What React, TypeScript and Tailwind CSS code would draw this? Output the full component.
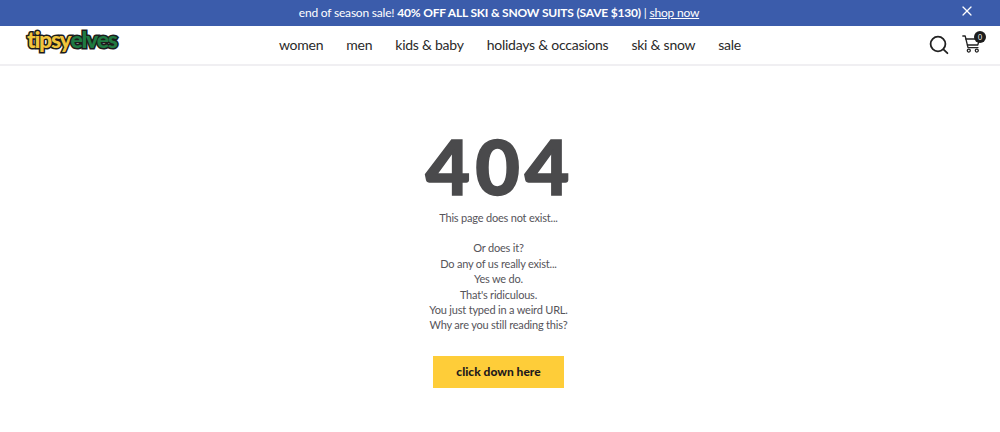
import { X } from 'lucide-react'

const NAV = ['women', 'men', 'kids & baby', 'holidays & occasions', 'ski & snow', 'sale']

const LINES = [
  'Or does it?',
  'Do any of us really exist...',
  'Yes we do.',
  "That's ridiculous.",
  'You just typed in a weird URL.',
  'Why are you still reading this?',
]

function Logo() {
  return (
    <a className="flex items-baseline text-[23px] leading-none font-black tracking-[-1.3px] [paint-order:stroke_fill] [-webkit-text-stroke:3px_#1c1c1c] font-['Lato',sans-serif]">
      <span className="text-[#f2c53d]">tipsy</span>
      <span className="text-[#1f7a42]">elves</span>
    </a>
  )
}

function SearchIcon() {
  return (
    <svg width="20" height="20" viewBox="0 0 20 20" fill="none" stroke="#222" strokeWidth="1.8" strokeLinecap="round">
      <circle cx="9" cy="9" r="7.4" />
      <path d="M14.4 14.4 L18.4 18.2" />
    </svg>
  )
}

function CartIcon() {
  return (
    <svg width="20" height="20" viewBox="0 0 20 20" fill="none" stroke="#222" strokeWidth="1.3" strokeLinecap="round" strokeLinejoin="round">
      <path d="M0.8 1 H3.2 L6 12.6 H16" />
      <path d="M3.8 4 H17.4 L15.8 10 H5.4" />
      <circle cx="6.8" cy="15.6" r="1.5" />
      <circle cx="14.8" cy="15.6" r="1.5" />
    </svg>
  )
}

export default function App() {
  return (
    <div className="h-[432px] w-[1000px] overflow-hidden bg-white font-['Lato',sans-serif]">
      {/* Promo bar */}
      <div className="relative flex h-[26px] items-center justify-center bg-[#3b5cab] pr-[2px] text-[12px] tracking-[-0.2px] text-white">
        <p>
          end of season sale! <b className="font-bold">40% OFF ALL SKI &amp; SNOW SUITS (SAVE $130)</b> | <a className="underline">shop now</a>
        </p>
        <X className="absolute right-[25px] top-[3px] size-[16px]" strokeWidth={1.8} />
      </div>

      {/* Header */}
      <header className="relative flex h-[40px] items-center justify-center border-b-2 border-[#f0eff2] pb-[2px] pl-[20px]">
        <div className="absolute left-[27px] top-[2px]">
          <Logo />
        </div>
        <nav className="flex gap-[23px] text-[14px] tracking-[-0.25px] text-[#2a2a2a]">
          {NAV.map(item => (
            <a key={item}>{item}</a>
          ))}
        </nav>
        <div className="absolute left-[929px] top-[9px]">
          <SearchIcon />
        </div>
        <div className="absolute left-[962px] top-[9px]">
          <CartIcon />
          <span className="absolute left-[12px] top-[-4px] flex size-[12px] items-center justify-center rounded-full bg-[#1d1d1d] text-[7px] text-white">0</span>
        </div>
      </header>

      {/* 404 */}
      <main className="flex flex-col items-center pr-[3px] text-[#56545a]">
        <h1 className="mt-[58px] ml-[3px] text-[77px] leading-[82px] font-black tracking-[5px] text-[#4a4a4c] [-webkit-text-stroke:1.5px_#4a4a4c]">404</h1>
        <p className="mt-[4px] text-[11px] leading-[15.4px] tracking-[-0.2px]">This page does not exist...</p>
        <div className="mt-[15px] flex flex-col items-center text-[11px] leading-[15.4px] tracking-[-0.2px]">
          {LINES.map(line => (
            <p key={line}>{line}</p>
          ))}
        </div>
        <button className="mt-[23px] h-[32px] w-[131px] bg-[#fecd39] text-[12px] font-black text-[#1f1a1c]">click down here</button>
      </main>
    </div>
  )
}
